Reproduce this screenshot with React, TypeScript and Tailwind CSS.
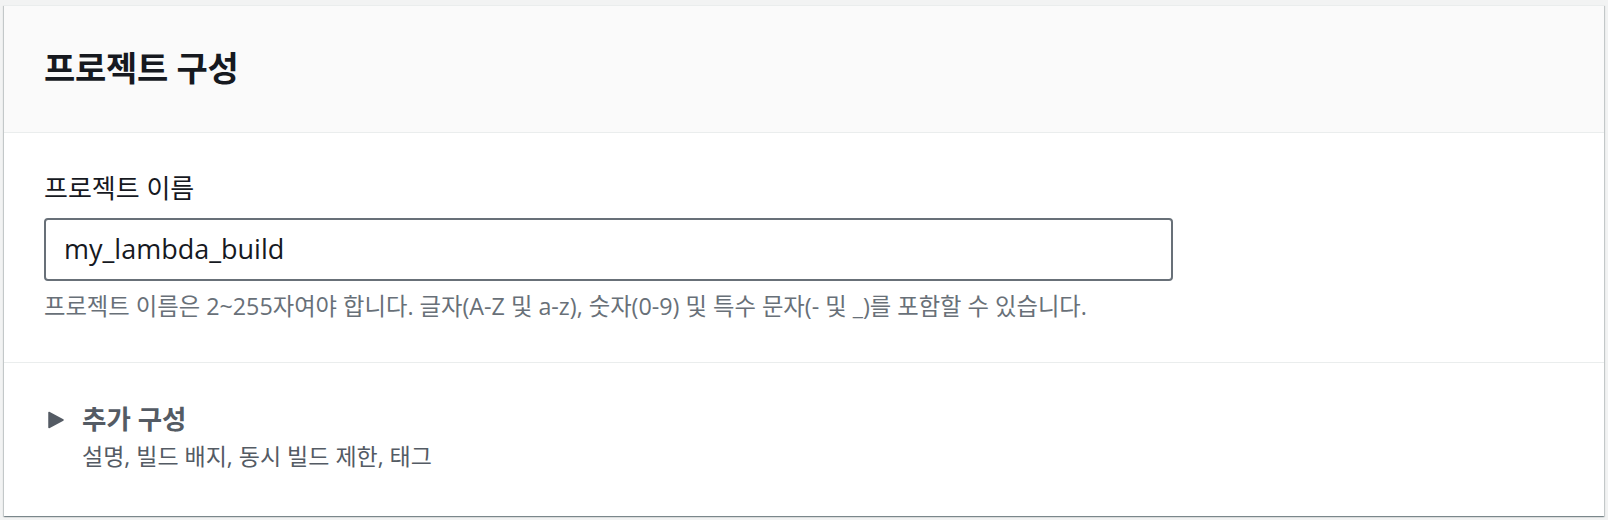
import React from "react";

function App() {
  return (
    <div
      className="w-[1608px] h-[520px] bg-[#f2f3f3] pt-[5px] px-[4px]"
      style={{ fontFamily: '"Open Sans", "Noto Sans CJK KR", sans-serif' }}
    >
      <div className="w-[1600px] h-[511px] bg-white border-t border-[#eaeded] shadow-[0_1px_1px_0_rgba(0,28,36,0.3),1px_1px_1px_0_rgba(0,28,36,0.15),-1px_1px_1px_0_rgba(0,28,36,0.15)] flex flex-col">
        <div className="h-[127px] bg-[#fafafa] border-b border-[#eaeded] flex items-center px-[40px]">
          <h2 className="text-[34px] font-bold text-[#16191f] leading-[40px] tracking-[-0.3px] -mt-[2px]">
            프로젝트 구성
          </h2>
        </div>
        <div className="px-[40px] pt-[38px] pb-[41px] border-b border-[#eaeded]">
          <div className="text-[26px] leading-[34px] text-[#16191f]">
            프로젝트 이름
          </div>
          <div className="mt-[13px] w-[1129px] h-[63px] border-2 border-[#687078] rounded-[4px] flex items-center px-[18px]">
            <span className="text-[27px] text-[#16191f]">my_lambda_build</span>
          </div>
          <div className="mt-[10px] text-[23.3px] leading-[30px] text-[#687078]">
            프로젝트 이름은 2~255자여야 합니다. 글자(A-Z 및 a-z), 숫자(0-9) 및 특수 문자(- 및 _)를 포함할 수 있습니다.
          </div>
        </div>
        <div className="px-[44px] pt-[39px] flex flex-row gap-[18px]">
          <svg width="16" height="18" viewBox="0 0 16 18" className="mt-[9px]">
            <path d="M1 1.5 L15 9 L1 16.5 Z" fill="#545b64" stroke="#545b64" strokeWidth="1.5" strokeLinejoin="round" />
          </svg>
          <div className="flex flex-col">
            <div className="text-[26.5px] leading-[34px] font-bold text-[#545b64]">추가 구성</div>
            <div className="mt-[5px] text-[23px] leading-[30px] text-[#545b64]">
              설명, 빌드 배지, 동시 빌드 제한, 태그
            </div>
          </div>
        </div>
      </div>
    </div>
  );
}

export default App;
